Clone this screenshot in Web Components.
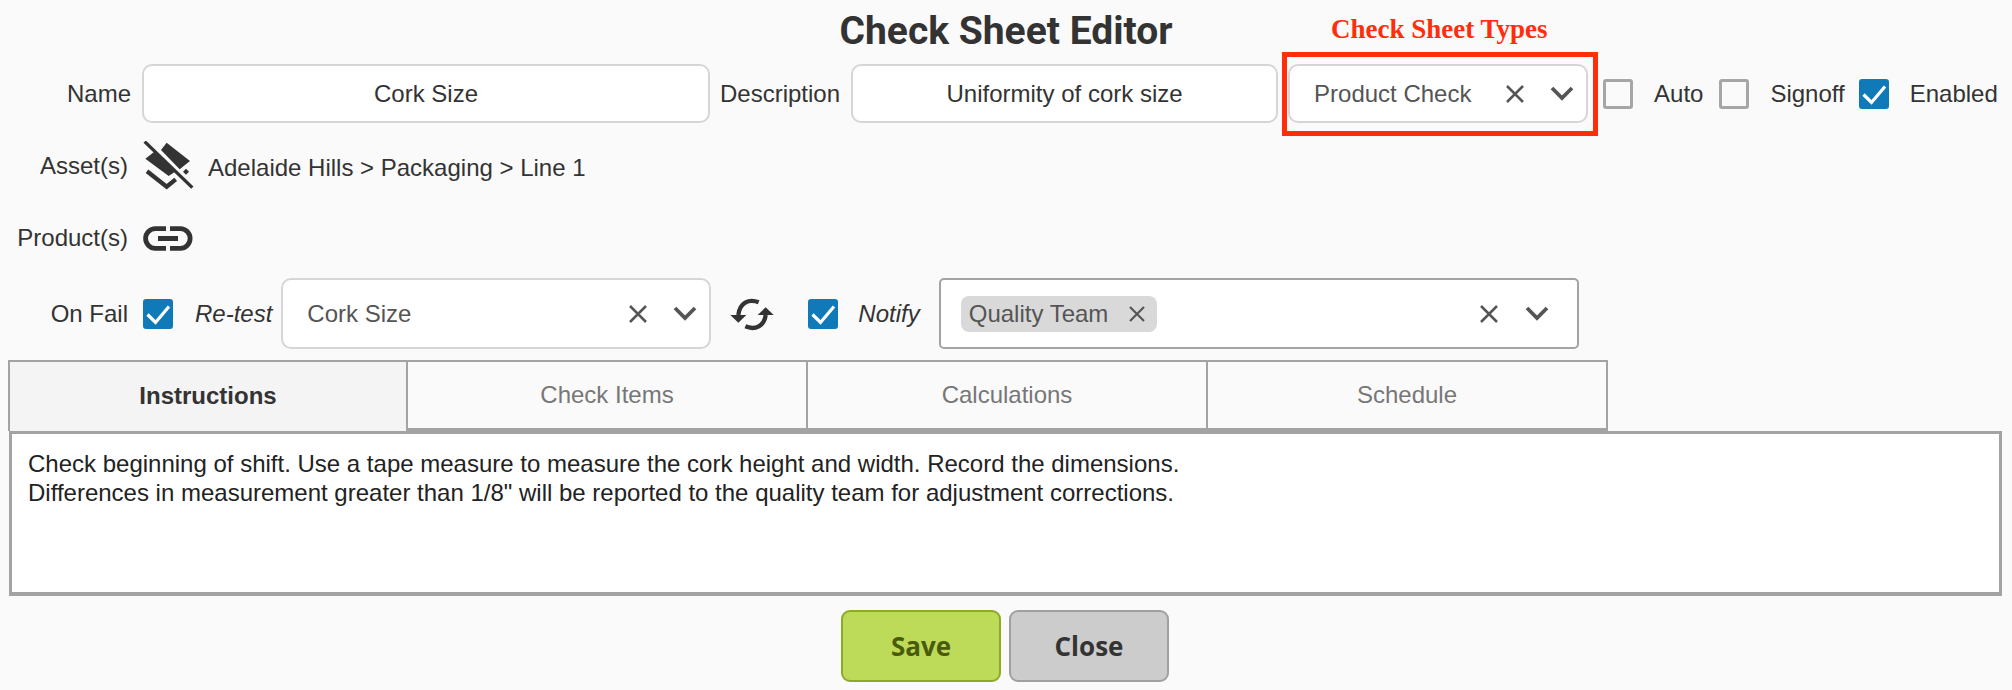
<!DOCTYPE html>
<html>
<head>
<meta charset="utf-8">
<title>Check Sheet Editor</title>
<style>
  html, body { margin: 0; padding: 0; background: #fafafa; }
  body { font-family: "Liberation Sans", Arial, sans-serif; color: #333; overflow: hidden; }
</style>
</head>
<body>
<check-sheet-editor></check-sheet-editor>

<script>
const X_ICON = `<svg width="18" height="18" viewBox="0 0 18 18"><path d="M1 1L17 17M17 1L1 17" stroke="currentColor" stroke-width="2.5" fill="none"/></svg>`;
const CHEVRON_ICON = `<svg width="24" height="15" viewBox="0 0 24 15"><path d="M2 2L12 12L22 2" stroke="currentColor" stroke-width="3.8" fill="none"/></svg>`;

class FieldLabel extends HTMLElement {
  constructor() {
    super();
    this.attachShadow({ mode: "open" });
    this.shadowRoot.innerHTML = `
      <style>
        :host { display: block; font-size: 24px; line-height: 30px; color: #333; white-space: nowrap; text-align: right; }
        :host([italic]) { font-style: italic; }
      </style>
      <slot></slot>`;
  }
}
customElements.define("field-label", FieldLabel);

class TextBox extends HTMLElement {
  constructor() {
    super();
    this.attachShadow({ mode: "open" });
    this.shadowRoot.innerHTML = `
      <style>
        :host {
          display: flex; align-items: center; justify-content: center; box-sizing: border-box;
          height: 59px; background: #fff; border: 2px solid #d6d6d6; border-radius: 10px;
          font-size: 24px; color: #333;
        }
      </style>
      <slot></slot>`;
  }
}
customElements.define("text-box", TextBox);

class SelectBox extends HTMLElement {
  constructor() {
    super();
    this.attachShadow({ mode: "open" });
    this.shadowRoot.innerHTML = `
      <style>
        :host {
          display: flex; align-items: center; box-sizing: border-box;
          height: 59px; background: #fff; border: 2px solid #d6d6d6; border-radius: 10px;
          padding: 0 12px 0 24px; font-size: 24px; color: #555;
        }
        :host([tall]) { height: 71px; }
        :host([dark]) { border: 2px solid #a3a3a3; border-radius: 5px; padding-left: 20px; padding-right: 28px; }
        :host([dark]) .clear { margin-right: 27px; }
        .value { flex: 1; min-width: 0; white-space: nowrap; }
        .clear { display: flex; color: #555; margin-right: 26px; }
        .open { display: flex; color: #555; }
      </style>
      <div class="value"><slot></slot></div>
      <span class="clear">${X_ICON}</span>
      <span class="open">${CHEVRON_ICON}</span>`;
  }
}
customElements.define("select-box", SelectBox);

class TagChip extends HTMLElement {
  constructor() {
    super();
    this.attachShadow({ mode: "open" });
    this.shadowRoot.innerHTML = `
      <style>
        :host {
          display: inline-flex; align-items: center; box-sizing: border-box; height: 36px;
          background: #d9d9d9; border-radius: 8px; padding: 0 12px 0 8px;
          font-size: 24px; color: #555; white-space: nowrap;
        }
        svg { margin-left: 21px; }
      </style>
      <slot></slot>
      <svg width="16" height="16" viewBox="0 0 16 16"><path d="M1 1L15 15M15 1L1 15" stroke="currentColor" stroke-width="2.2" fill="none"/></svg>`;
  }
}
customElements.define("tag-chip", TagChip);

class CheckBox extends HTMLElement {
  constructor() {
    super();
    this.attachShadow({ mode: "open" });
    this.shadowRoot.innerHTML = `
      <style>
        :host {
          display: block; box-sizing: border-box; width: 30px; height: 30px; flex: none;
          border: 3px solid #a6a6a6; border-radius: 3px; background: #fafafa;
        }
        :host([checked]) { border: 0; background: #0f7ab7; }
        svg { display: none; }
        :host([checked]) svg { display: block; }
      </style>
      <svg width="30" height="30" viewBox="0 0 30 30"><path d="M4.5 15.5L12.5 23.5L26 7.5" stroke="#fff" stroke-width="3.2" fill="none"/></svg>`;
  }
}
customElements.define("check-box", CheckBox);

class TabItem extends HTMLElement {
  constructor() {
    super();
    this.attachShadow({ mode: "open" });
    this.shadowRoot.innerHTML = `
      <style>
        :host {
          display: flex; align-items: center; justify-content: center; box-sizing: border-box;
          height: 71px; border-top: 2px solid #a3a3a3; border-right: 2px solid #a3a3a3;
          border-bottom: 3px solid #a3a3a3; font-size: 24px; color: #777; padding-bottom: 1px;
        }
        :host([active]) {
          background: #f4f4f4; color: #333; font-weight: bold; border-left: 2px solid #a3a3a3; border-bottom: 0;
        }
      </style>
      <slot></slot>`;
  }
}
customElements.define("tab-item", TabItem);

class ActionButton extends HTMLElement {
  constructor() {
    super();
    this.attachShadow({ mode: "open" });
    this.shadowRoot.innerHTML = `
      <style>
        :host {
          display: flex; align-items: center; justify-content: center; box-sizing: border-box;
          width: 160px; height: 72px; border: 2px solid #a0a0a0; border-radius: 9px;
          background: #ccc; color: #333; font: bold 26px "Open Sans", sans-serif;
        }
        :host([primary]) { background: #bddb58; border-color: #8fa927; color: #4a5c0c; }
      </style>
      <slot></slot>`;
  }
}
customElements.define("action-button", ActionButton);

class TypeCallout extends HTMLElement {
  constructor() {
    super();
    this.attachShadow({ mode: "open" });
    this.shadowRoot.innerHTML = `
      <style>
        :host { display: block; position: relative; }
        .frame { position: absolute; left: -6px; top: -12px; right: -10px; bottom: -13px; border: 5px solid #ff2d0c; pointer-events: none; }
        .caption {
          position: absolute; left: 43px; top: -50px; white-space: nowrap;
          font: bold 27px "Liberation Serif", serif; color: #ff2d0c; line-height: 30px;
        }
      </style>
      <slot></slot>
      <div class="frame"></div>
      <div class="caption">Check Sheet Types</div>`;
  }
}
customElements.define("type-callout", TypeCallout);

class CheckSheetEditor extends HTMLElement {
  constructor() {
    super();
    this.attachShadow({ mode: "open" });
    /*html*/
    this.shadowRoot.innerHTML = `
      <style>
        :host { display: block; width: 2012px; height: 690px; overflow: hidden; font-family: "Liberation Sans", Arial, sans-serif; }
        .title { height: 64px; display: flex; align-items: center; justify-content: center; padding: 0 0 2px 0; box-sizing: border-box; font: bold 39px Roboto, sans-serif; color: #333; }
        .row { display: flex; align-items: center; }
        .lab { width: 128px; flex: none; margin-right: 15px; }
        .r1 { height: 59px; }
        .r2 { height: 50px; margin-top: 18px; }
        .r3 { height: 46px; margin-top: 24px; }
        .r4 { height: 71px; margin-top: 17px; }
        .r1 .lab { width: 131px; margin-right: 11px; }
        .path { margin-left: 14px; font-size: 24px; color: #333; position: relative; top: 2px; }
        .icon { display: block; flex: none; color: #333; }
        .tabs { display: grid; grid-template-columns: repeat(4, 400px); margin: 11px 0 0 8px; }
        .body {
          box-sizing: border-box; height: 165px; margin: 0 10px 0 9px; background: #fff; border: 3px solid #a3a3a3; border-bottom-width: 4px;
          padding: 15px 16px; font-size: 24px; line-height: 29px; color: #222; white-space: pre-line;
        }
        .actions { display: flex; justify-content: center; gap: 8px; margin-top: 14px; padding-right: 2px; }
      </style>
      <div class="title">Check Sheet Editor</div>

      <div class="row r1">
        <field-label class="lab">Name</field-label>
        <text-box style="width:568px">Cork Size</text-box>
        <field-label style="margin-left:10px;margin-right:11px">Description</field-label>
        <text-box style="width:427px">Uniformity of cork size</text-box>
        <type-callout style="width:300px;margin-left:10px"><select-box>Product Check</select-box></type-callout>
        <check-box style="margin-left:15px"></check-box>
        <field-label style="margin-left:21px">Auto</field-label>
        <check-box style="margin-left:16px"></check-box>
        <field-label style="margin-left:21px">Signoff</field-label>
        <check-box checked style="margin-left:14px"></check-box>
        <field-label style="margin-left:21px">Enabled</field-label>
      </div>

      <div class="row r2">
        <field-label class="lab">Asset(s)</field-label>
        <svg class="icon" width="51" height="50" viewBox="21 15 153 150">
          <path fill="#333" d="M92 20L162 75L131 100L75 42ZM28 68L55 47L116 108L98 120Z"/>
          <path fill="none" stroke="#333" stroke-width="10" d="M26 17L169 155"/>
          <path fill="none" stroke="#333" stroke-width="13" d="M33 106L92 152L119 130"/>
          <path fill="#333" d="M150 98L159 107L150 116L141 107Z"/>
        </svg>
        <span class="path">Adelaide Hills &gt; Packaging &gt; Line 1</span>
      </div>

      <div class="row r3">
        <field-label class="lab">Product(s)</field-label>
        <svg class="icon" width="50" height="27" viewBox="0 0 50 27">
          <path fill="none" stroke="#333" stroke-width="4.8" d="M23 3.7H12.4a9.8 9.8 0 0 0 0 19.6H23M27 3.7H37.3a9.8 9.8 0 0 1 0 19.6H27"/>
          <path fill="none" stroke="#333" stroke-width="5" d="M15 13.5H35"/>
        </svg>
      </div>

      <div class="row r4">
        <field-label class="lab">On Fail</field-label>
        <check-box checked></check-box>
        <field-label italic style="margin-left:22px;margin-right:9px">Re-test</field-label>
        <select-box tall style="width:430px">Cork Size</select-box>
        <svg class="icon" style="margin-left:18px" width="46" height="34" viewBox="26 34 138 102">
          <path fill="none" stroke="#333" stroke-width="13" d="M115 50C85 38 58 52 54 88"/>
          <path fill="#333" d="M30 88H78L54 111Z"/>
          <path fill="none" stroke="#333" stroke-width="13" d="M75 122C105 135 132 120 136 88"/>
          <path fill="#333" d="M112 88H160L136 65Z"/>
        </svg>
        <check-box checked style="margin-left:33px"></check-box>
        <field-label italic style="margin-left:20px;margin-right:19px">Notify</field-label>
        <select-box tall dark style="width:640px"><tag-chip>Quality Team</tag-chip></select-box>
      </div>

      <div class="tabs">
        <tab-item active>Instructions</tab-item>
        <tab-item>Check Items</tab-item>
        <tab-item>Calculations</tab-item>
        <tab-item>Schedule</tab-item>
      </div>
      <div class="body">Check beginning of shift. Use a tape measure to measure the cork height and width. Record the dimensions.
Differences in measurement greater than 1/8" will be reported to the quality team for adjustment corrections.</div>

      <div class="actions">
        <action-button primary>Save</action-button>
        <action-button>Close</action-button>
      </div>`;
  }
}
customElements.define("check-sheet-editor", CheckSheetEditor);
</script>
</body>
</html>
